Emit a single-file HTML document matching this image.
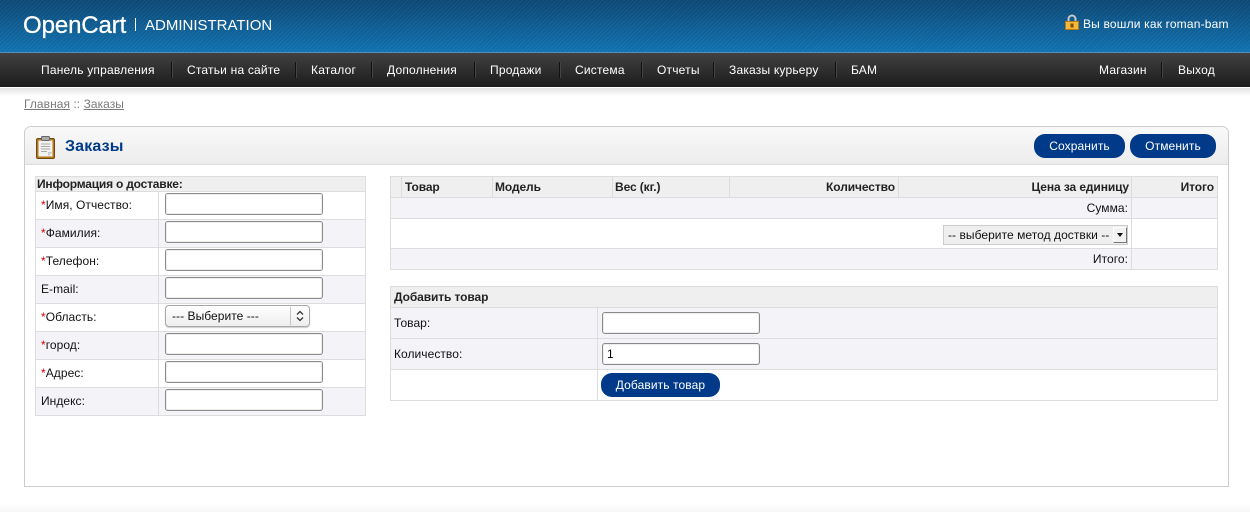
<!DOCTYPE html>
<html lang="ru"><head><meta charset="utf-8"><title>Заказы</title>
<style>
*{box-sizing:border-box}
html,body{margin:0;padding:0;width:1250px;height:512px;overflow:hidden;background:#fff}
body{position:relative;font-family:"Liberation Sans",Arial,sans-serif;font-size:12px;color:#000}
.a{position:absolute;white-space:nowrap;line-height:14px}
#hd{position:absolute;left:0;top:0;width:1250px;height:52px;background:linear-gradient(#0e4a78,#1275b5)}
#hd:after{content:"";position:absolute;inset:0;background:repeating-linear-gradient(135deg,rgba(255,255,255,.035) 0 1px,rgba(0,0,0,.035) 1px 3px)}
#ln{position:absolute;left:0;top:52px;width:1250px;height:1px;background:#5c8bb5}
#nv{position:absolute;left:0;top:53px;width:1250px;height:34px;background:linear-gradient(#414141,#1c1c1c)}
#sh{position:absolute;left:0;top:88px;width:1250px;height:8px;background:linear-gradient(#e2e2e2,#fff)}
#ft{position:absolute;left:0;top:504px;width:1250px;height:8px;background:linear-gradient(#fff,#f6f7f7)}
.n{color:#fff;top:63px;letter-spacing:.2px}
.s{position:absolute;top:62px;width:1px;height:16px;background:#111;box-shadow:1px 0 0 #444}
.bc{color:#7a7a7a;top:97px;letter-spacing:.05px}
.bc u{text-decoration:underline}
#box{position:absolute;left:24px;top:126px;width:1205px;height:361px;border:1px solid #ccc;border-radius:7px 7px 0 0;background:#fff}
#bh{position:absolute;left:25px;top:127px;width:1203px;height:38px;background:linear-gradient(#f9f9f9,#ececec);border-bottom:1px solid #ddd;border-radius:6px 6px 0 0}
.btn{position:absolute;background:#003a88;color:#fff;border-radius:11px;text-align:center;letter-spacing:.1px;line-height:24px;height:24px}
.r{position:absolute;background:#fff}
.h{background:#efefef}.g{background:#f3f3f8}
.l{position:absolute;background:#ddd}
.t{letter-spacing:.05px;color:#111}
.b{font-weight:bold;color:#222;letter-spacing:-.1px}
.i{position:absolute;width:158px;height:22px;background:#fff;border:1px solid #8a8a8a;border-radius:3px;box-shadow:inset 0 0 0 1px #eee;font-size:12px;line-height:20px;padding-left:4px}
em{color:#d00;font-style:normal}
</style></head><body>
<div id="hd"></div><div id="ln"></div><div id="nv"></div><div id="sh"></div><div id="ft"></div>
<div class="a" style="left:23px;top:13px;color:#fff;font-size:24px;line-height:26px;-webkit-text-stroke:.3px #fff;letter-spacing:-.1px">OpenCart</div>
<div class="a" style="left:135px;top:18px;width:1px;height:13px;background:#fff"></div>
<div class="a" style="left:145px;top:17px;color:#fff;font-size:15px;line-height:18px">ADMINISTRATION</div>
<svg class="a" style="left:1065px;top:14px" width="14" height="17" viewBox="0 0 14 17"><path d="M3.500 8V5a3.500 3.500 0 0 1 7 0v3" fill="none" stroke="#c5c8cc" stroke-width="2"/><rect x=".5" y="7.500" width="13" height="8" fill="#f5b93a" stroke="#b87a10"/><rect x="5.500" y="9.500" width="3" height="4" fill="#7a4e08"/></svg>
<div class="a" style="left:1083px;top:17px;color:#fff;letter-spacing:.18px">Вы вошли как roman-bam</div>

<div class="a n" style="left:41px">Панель управления</div><div class="s" style="left:171px"></div>
<div class="a n" style="left:187px">Статьи на сайте</div><div class="s" style="left:295px"></div>
<div class="a n" style="left:311px">Каталог</div><div class="s" style="left:371px"></div>
<div class="a n" style="left:387px">Дополнения</div><div class="s" style="left:474px"></div>
<div class="a n" style="left:490px">Продажи</div><div class="s" style="left:559px"></div>
<div class="a n" style="left:575px">Система</div><div class="s" style="left:641px"></div>
<div class="a n" style="left:657px">Отчеты</div><div class="s" style="left:713px"></div>
<div class="a n" style="left:729px">Заказы курьеру</div><div class="s" style="left:835px"></div>
<div class="a n" style="left:851px">БАМ</div>
<div class="a n" style="left:1099px">Магазин</div><div class="s" style="left:1161px"></div>
<div class="a n" style="left:1178px">Выход</div>

<div class="a bc" style="left:24px"><u>Главная</u> :: <u>Заказы</u></div>

<div id="box"></div><div id="bh"></div>
<svg class="a" style="left:36px;top:135px" width="20" height="25" viewBox="0 0 20 25"><rect x=".5" y="3.500" width="18" height="20" rx="1.500" fill="#b5761c" stroke="#6e4a14"/><rect x="2.500" y="5.500" width="14" height="16" fill="#f2f2ee"/><path d="M5 9h9M5 11.500h9M5 14h9M5 16.500h6" stroke="#aaa"/><path d="M12 21.500l4.500-4.500h-4.500z" fill="#ccc"/><rect x="5.500" y="1.500" width="8" height="4" rx="1" fill="#aaa" stroke="#666"/></svg>
<div class="a" style="left:65px;top:138px;color:#003a88;font-size:16px;line-height:18px;font-weight:bold;letter-spacing:.15px">Заказы</div>
<div class="btn" style="left:1034px;top:134px;width:91px">Сохранить</div>
<div class="btn" style="left:1130px;top:134px;width:86px">Отменить</div>

<!-- left table -->
<div class="r" style="left:35px;top:176px;width:331px;height:240px;background:#ddd"></div>
<div class="r h" style="left:36px;top:177px;width:329px;height:14px"></div>
<div class="r" style="left:36px;top:192px;width:329px;height:27px"></div>
<div class="r g" style="left:36px;top:220px;width:329px;height:27px"></div>
<div class="r" style="left:36px;top:248px;width:329px;height:27px"></div>
<div class="r g" style="left:36px;top:276px;width:329px;height:27px"></div>
<div class="r" style="left:36px;top:304px;width:329px;height:27px"></div>
<div class="r g" style="left:36px;top:332px;width:329px;height:27px"></div>
<div class="r" style="left:36px;top:360px;width:329px;height:27px"></div>
<div class="r g" style="left:36px;top:388px;width:329px;height:27px"></div>
<div class="l" style="left:158px;top:192px;width:1px;height:223px"></div>
<div class="a b" style="left:37px;top:177px;letter-spacing:-.2px">Информация о доставке:</div>
<div class="a t" style="left:41px;top:198px"><em>*</em>Имя, Отчество:</div>
<div class="a t" style="left:41px;top:226px"><em>*</em>Фамилия:</div>
<div class="a t" style="left:41px;top:254px"><em>*</em>Телефон:</div>
<div class="a t" style="left:41px;top:282px">E-mail:</div>
<div class="a t" style="left:41px;top:310px"><em>*</em>Область:</div>
<div class="a t" style="left:41px;top:338px"><em>*</em>город:</div>
<div class="a t" style="left:41px;top:366px"><em>*</em>Адрес:</div>
<div class="a t" style="left:41px;top:394px">Индекс:</div>
<div class="i" style="left:165px;top:193px"></div>
<div class="i" style="left:165px;top:221px"></div>
<div class="i" style="left:165px;top:249px"></div>
<div class="i" style="left:165px;top:277px"></div>
<div class="i" style="left:165px;top:333px"></div>
<div class="i" style="left:165px;top:361px"></div>
<div class="i" style="left:165px;top:389px"></div>
<div class="a" style="left:165px;top:305px;width:145px;height:22px;border:1px solid #a8a8a8;border-radius:4px;background:linear-gradient(#fff,#eee);box-shadow:0 1px 1px #ccc"></div>
<div class="a t" style="left:172px;top:309px">--- Выберите ---</div>
<div class="a" style="left:290px;top:307px;width:1px;height:18px;background:#c4c4c4"></div>
<svg class="a" style="left:296px;top:310px" width="8" height="12" viewBox="0 0 8 12"><path d="M1 4.500L4 1.500 7 4.500M1 7.500L4 10.500 7 7.500" fill="none" stroke="#333" stroke-width="1.300"/></svg>

<!-- right table -->
<div class="r" style="left:390px;top:176px;width:828px;height:94px;background:#ddd"></div>
<div class="r h" style="left:391px;top:177px;width:826px;height:20px"></div>
<div class="r g" style="left:391px;top:198px;width:826px;height:20px"></div>
<div class="r" style="left:391px;top:219px;width:826px;height:29px"></div>
<div class="r g" style="left:391px;top:249px;width:826px;height:20px"></div>
<div class="l" style="left:401px;top:177px;width:1px;height:20px"></div>
<div class="l" style="left:492px;top:177px;width:1px;height:20px"></div>
<div class="l" style="left:612px;top:177px;width:1px;height:20px"></div>
<div class="l" style="left:729px;top:177px;width:1px;height:20px"></div>
<div class="l" style="left:898px;top:177px;width:1px;height:20px"></div>
<div class="l" style="left:1131px;top:177px;width:1px;height:92px"></div>
<div class="a b" style="left:405px;top:180px">Товар</div>
<div class="a b" style="left:495px;top:180px">Модель</div>
<div class="a b" style="left:615px;top:180px">Вес (кг.)</div>
<div class="a b" style="right:355px;top:180px">Количество</div>
<div class="a b" style="right:121px;top:180px">Цена за единицу</div>
<div class="a b" style="right:36px;top:180px">Итого</div>
<div class="a t" style="right:122px;top:201px">Сумма:</div>
<div class="a t" style="right:122px;top:252px">Итого:</div>
<div class="a" style="left:943px;top:225px;width:185px;height:20px;background:#efefef;border:1px solid #ccc"></div>
<div class="a t" style="left:948px;top:228px">-- выберите метод доствки --</div>
<div class="a" style="left:1113px;top:227px;width:14px;height:16px;background:#f2f2f2;border-right:1px solid #777;border-bottom:1px solid #777;border-top:1px solid #fff;border-left:1px solid #fff"></div>
<div class="a" style="left:1117px;top:233px;width:0;height:0;border:3px solid transparent;border-top:4px solid #111;border-bottom:0"></div>

<!-- add product -->
<div class="r" style="left:390px;top:286px;width:828px;height:115px;background:#ddd"></div>
<div class="r h" style="left:391px;top:287px;width:826px;height:20px"></div>
<div class="r g" style="left:391px;top:308px;width:826px;height:30px"></div>
<div class="r g" style="left:391px;top:339px;width:826px;height:30px"></div>
<div class="r" style="left:391px;top:370px;width:826px;height:30px"></div>
<div class="l" style="left:597px;top:308px;width:1px;height:92px"></div>
<div class="a b" style="left:394px;top:290px">Добавить товар</div>
<div class="a t" style="left:394px;top:316px">Товар:</div>
<div class="a t" style="left:394px;top:347px">Количество:</div>
<div class="i" style="left:602px;top:312px"></div>
<div class="i" style="left:602px;top:343px">1</div>
<div class="btn" style="left:601px;top:373px;width:119px">Добавить товар</div>
</body></html>
